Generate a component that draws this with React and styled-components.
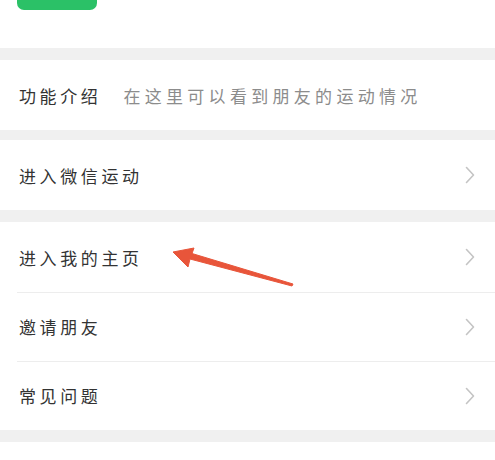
import React from "react";
import styled, { createGlobalStyle } from "styled-components";

const Global = createGlobalStyle`
  html, body { margin: 0; padding: 0; background: #ffffff; }
  body { font-family: "Noto Sans CJK SC", "Noto Sans", sans-serif; }
`;

const Page = styled.div`
  display: flex;
  flex-direction: column;
  width: 495px;
  background: #ffffff;
`;

const Header = styled.div`
  height: 48px;
  padding-left: 17px;
  display: flex;
  align-items: flex-start;
  background: #ffffff;
`;

const Footer = styled.div`
  height: 18px;
  background: #ffffff;
`;

const GreenButton = styled.div`
  width: 80px;
  height: 10px;
  background: #2bc167;
  border-radius: 0 0 7px 7px;
`;

const Band = styled.div`
  height: ${(p) => p.$h}px;
  background: #f0f0f0;
`;

const Group = styled.div`
  display: flex;
  flex-direction: column;
  background: #ffffff;
`;

const Row = styled.div`
  position: relative;
  height: ${(p) => (p.$h ? p.$h : 70)}px;
  display: flex;
  align-items: center;
  padding: 0 20px 0 19px;
  box-sizing: border-box;
  ${(p) =>
    p.$divider
      ? `&::before {
    content: "";
    position: absolute;
    top: 0;
    left: 17px;
    right: 0;
    height: 1px;
    background: #ededed;
  }`
      : ""}
`;

const Title = styled.span`
  font-size: 17px;
  letter-spacing: 3.6px;
  color: #333333;
  white-space: nowrap;
`;

const Desc = styled.span`
  margin-left: 22px;
  font-size: 17px;
  letter-spacing: 4.3px;
  color: #8c8c8c;
  white-space: nowrap;
`;

const Spacer = styled.div`
  flex: 1;
`;

const Chevron = styled.svg`
  width: 10px;
  height: 18px;
  flex: none;
`;

const Arrow = styled.svg`
  position: absolute;
  left: 168px;
  top: 22px;
  width: 132px;
  height: 45px;
  overflow: visible;
`;

const ChevronIcon = () => (
  <Chevron viewBox="0 0 10 18">
    <polyline
      points="1.5,1.5 8.5,9 1.5,16.5"
      fill="none"
      stroke="#c4c4c4"
      strokeWidth="1.6"
      strokeLinecap="round"
      strokeLinejoin="round"
    />
  </Chevron>
);

const Item = ({ title, h, divider, children }) => (
  <Row $h={h} $divider={divider}>
    <Title>{title}</Title>
    {children}
    <Spacer />
    <ChevronIcon />
  </Row>
);

export default function App() {
  return (
    <>
      <Global />
      <Page>
        <Header>
          <GreenButton />
        </Header>
        <Band $h={12} />
        <Group>
          <Row>
            <Title>功能介绍</Title>
            <Desc>在这里可以看到朋友的运动情况</Desc>
          </Row>
        </Group>
        <Band $h={10} />
        <Group>
          <Item title="进入微信运动" />
        </Group>
        <Band $h={12} />
        <Group>
          <Item title="进入我的主页" h={70}>
            <Arrow viewBox="0 0 132 45">
              <path
                d="M125 40 L24 9.5 L26 4 L5 8 L20 23 L22 15 L124 42 Z"
                fill="#e8553a"
                stroke="#e8553a"
                strokeWidth="1"
                strokeLinejoin="round"
              />
            </Arrow>
          </Item>
          <Item title="邀请朋友" h={69} divider />
          <Item title="常见问题" h={69} divider />
        </Group>
        <Band $h={12} />
        <Footer />
      </Page>
    </>
  );
}
